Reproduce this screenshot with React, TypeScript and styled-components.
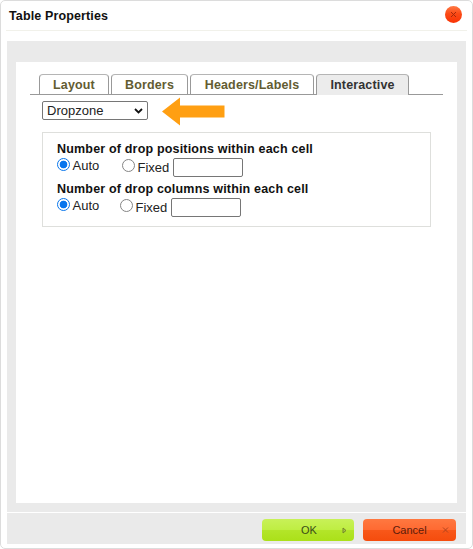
import React from "react";
import styled, { createGlobalStyle } from "styled-components";

const Global = createGlobalStyle`
  * { box-sizing: border-box; }
  body { margin: 0; background: #fff; font-family: "Liberation Sans", Arial, sans-serif; }
`;

const Dialog = styled.div`
  width: 473px;
  height: 549px;
  padding: 0 5px;
  background: #fff;
  border: 1px solid #dcdcdc;
  border-radius: 5px;
  display: flex;
  flex-direction: column;
`;

const Header = styled.header`
  height: 30px;
  flex: none;
  display: flex;
  justify-content: space-between;
  padding: 5px 4px 0 3px;
  border-bottom: 1px solid #f1f1ea;
`;

const Title = styled.h1`
  margin: 1px 0 0;
  font-size: 12.5px;
  line-height: 19px;
  letter-spacing: 0.13px;
  color: #111;
`;

const CloseButton = styled.button`
  width: 17px;
  height: 17px;
  padding: 0;
  border: 0;
  border-radius: 50%;
  background: linear-gradient(#ff7a45, #fb4a16 45%, #f93305);
  display: grid;
  place-items: center;
  margin-right: 1px;
`;

const Frame = styled.main`
  flex: none;
  height: 471px;
  margin: 10px 1px 0;
  padding: 21px 9px 9px;
  background: #eaeaea;
`;

const Panel = styled.section`
  height: 441px;
  background: #fff;
  padding: 12px 14px 0;
`;

const Tabs = styled.nav`
  height: 21px;
  padding-left: 9px;
  display: flex;
  gap: 2px;
  border-bottom: 1px solid #999;
`;

const Tab = styled.div<{ $width: number; $active?: boolean }>`
  width: ${(p) => p.$width}px;
  height: ${(p) => (p.$active ? 21 : 20)}px;
  border: 1px solid #999;
  border-top-color: #b5b5b5;
  border-bottom: 0;
  border-radius: 4px 4px 0 0;
  background: ${(p) => (p.$active ? "#ececec" : "#fff")};
  color: ${(p) => (p.$active ? "#333" : "#635c32")};
  font-size: 12.5px;
  font-weight: bold;
  line-height: 21px;
  letter-spacing: 0.15px;
  text-align: center;
  white-space: nowrap;
`;

const TypeRow = styled.div`
  display: flex;
  height: 37px;
  padding: 2px 0 0 12px;
  gap: 14px;
`;

const Select = styled.div`
  width: 106px;
  height: 19px;
  margin-top: 4px;
  padding: 0 4px;
  border: 1px solid #767676;
  border-radius: 2px;
  display: flex;
  align-items: center;
  justify-content: space-between;
  color: #222;
  font-size: 13px;
  line-height: 17px;
`;

const Options = styled.div`
  width: 389px;
  height: 95px;
  margin-left: 12px;
  padding: 7px 14px;
  border: 1px solid #dedfdc;
`;

const Group = styled.div`
  height: 40px;
`;

const GroupTitle = styled.div`
  height: 17px;
  color: #111;
  font-size: 12.5px;
  font-weight: bold;
  line-height: 19px;
  letter-spacing: 0.18px;
  white-space: nowrap;
`;

const Choices = styled.div`
  display: flex;
  align-items: flex-start;
`;

const Choice = styled.label<{ $width: number; $drop?: number }>`
  width: ${(p) => p.$width}px;
  padding-top: ${(p) => p.$drop ?? 0}px;
  display: flex;
  gap: 2.5px;
  color: #222;
  font-size: 13px;
  line-height: 17px;
`;

const Radio = styled.span<{ $checked?: boolean }>`
  width: 13px;
  height: 13px;
  margin-top: ${(p) => (p.$checked ? 1 : 0)}px;
  border: 1px solid ${(p) => (p.$checked ? "#0876ec" : "#858585")};
  border-radius: 50%;
  background: ${(p) => (p.$checked ? "radial-gradient(circle, #0875ed 3.5px, #fff 4.2px)" : "#fff")};
`;

const NumberInput = styled.input`
  width: 70px;
  height: 19px;
  margin: 1px 0 0;
  padding: 1px 3px;
  border: 1px solid #767676;
  border-radius: 2px;
  font: 12.5px "Liberation Sans", sans-serif;
`;

const Footer = styled.footer`
  height: 31px;
  margin: 1px 1px 0;
  padding: 6px 10px 0 0;
  display: flex;
  justify-content: flex-end;
  gap: 9px;
  background: #eaeaea;
`;

const ActionButton = styled.button<{ $danger?: boolean }>`
  width: ${(p) => (p.$danger ? 93 : 92)}px;
  height: 22px;
  padding: 0;
  border: 0;
  border-radius: 4px;
  background: ${(p) =>
    p.$danger
      ? "linear-gradient(#ff7840, #ff6a32 48%, #f85719 52%, #f54c0d)"
      : "linear-gradient(#c8f158, #bfee43 48%, #b3e529 52%, #abe019)"};
  display: grid;
  grid-template-columns: 1fr ${(p) => (p.$danger ? 14 : 12)}px;
  align-items: center;
  color: ${(p) => (p.$danger ? "#5b1c0c" : "#3b4d18")};
  font: 11px "Liberation Sans", sans-serif;
`;

const ActionText = styled.span`
  padding-left: 14px;
`;

function OptionGroup({ title, first, second }: { title: string; first: number; second: number }) {
  return (
    <Group>
      <GroupTitle>{title}</GroupTitle>
      <Choices>
        <Choice $width={first}><Radio $checked />Auto</Choice>
        <Choice $width={second} $drop={2}><Radio />Fixed</Choice>
        <NumberInput aria-label={title} />
      </Choices>
    </Group>
  );
}

export default function App() {
  return (
    <>
      <Global />
      <Dialog>
        <Header>
          <Title>Table Properties</Title>
          <CloseButton aria-label="Close">
            <svg width="7" height="7" viewBox="0 0 7 7"><path d="M1 1L6 6M6 1L1 6" stroke="#a52a0c" /></svg>
          </CloseButton>
        </Header>
        <Frame>
          <Panel>
            <Tabs>
              <Tab $width={70}>Layout</Tab>
              <Tab $width={77}>Borders</Tab>
              <Tab $width={124}>Headers/Labels</Tab>
              <Tab $width={93} $active>Interactive</Tab>
            </Tabs>
            <TypeRow>
              <Select>
                Dropzone
                <svg width="9" height="6" viewBox="0 0 9 6"><path d="M1 1l3.5 3.4L8 1" fill="none" stroke="#111" strokeWidth="1.8" /></svg>
              </Select>
              <svg width="63" height="29" viewBox="0 0 63 29"><path d="M0 14.5L18 .5v8h44.5v12H18v8z" fill="#ff9f12" /></svg>
            </TypeRow>
            <Options>
              <OptionGroup title="Number of drop positions within each cell" first={65} second={51} />
              <OptionGroup title="Number of drop columns within each cell" first={63} second={51} />
            </Options>
          </Panel>
        </Frame>
        <Footer>
          <ActionButton>
            <ActionText>OK</ActionText>
            <svg width="5" height="7" viewBox="0 0 5 7"><path d="M1 1l3 2.5L1 6z" fill="#a8c848" stroke="#75862b" /></svg>
          </ActionButton>
          <ActionButton $danger>
            <ActionText>Cancel</ActionText>
            <svg width="7" height="6" viewBox="0 0 7 6"><path d="M1 .5l5 5M6 .5l-5 5" stroke="#b0441e" /></svg>
          </ActionButton>
        </Footer>
      </Dialog>
    </>
  );
}
